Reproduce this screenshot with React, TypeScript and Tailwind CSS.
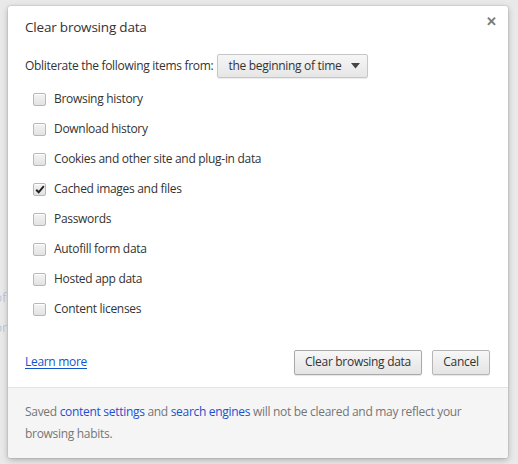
import React from "react";

const items: { label: string; checked: boolean }[] = [
  { label: "Browsing history", checked: false },
  { label: "Download history", checked: false },
  { label: "Cookies and other site and plug-in data", checked: false },
  { label: "Cached images and files", checked: true },
  { label: "Passwords", checked: false },
  { label: "Autofill form data", checked: false },
  { label: "Hosted app data", checked: false },
  { label: "Content licenses", checked: false },
];

function Checkbox({ checked }: { checked: boolean }) {
  return (
    <span className="relative flex h-[13px] w-[13px] shrink-0 items-center justify-center rounded-[2px] border border-[#b8b8b8] bg-gradient-to-b from-[#f4f4f4] to-[#e2e2e2] shadow-[inset_0_1px_0_#fff]">
      {checked && (
        <svg width="10" height="9" viewBox="0 0 10 9" className="absolute">
          <path d="M1.2 4.8 L3.7 7.3 L8.8 1.2" fill="none" stroke="#222" strokeWidth="2" />
        </svg>
      )}
    </span>
  );
}

export default function App() {
  return (
    <div
      className="relative h-[464px] w-[518px] overflow-hidden bg-[#e9e9e9] text-[#333]"
      style={{ fontFamily: '"Open Sans", "Noto Sans", sans-serif' }}
    >
      {/* faded page behind the overlay */}
      <div className="absolute left-[-5px] top-[283px] text-[12px] leading-[30px] text-[#b9c6d6] blur-[0.4px]">
        <div>of</div>
        <div>or</div>
      </div>

      <div className="absolute left-[8px] top-[6px] flex h-[452px] w-[500px] flex-col overflow-hidden rounded-[3px] bg-white shadow-[0_2px_6px_rgba(0,0,0,0.25),0_0_0_1px_rgba(0,0,0,0.06)]">
        <div className="relative flex h-[46px] items-start pl-[17px] pt-[11px] text-[13.5px] leading-[20px] tracking-[-0.2px]">
          Clear browsing data
          <span className="absolute right-[11px] top-[5px] text-[13px] font-bold text-[#7a7a7a]">✕</span>
        </div>

        <div className="flex flex-col px-[17px] text-[12px] tracking-[-0.3px]">
          <div className="flex h-[28px] items-center gap-[4px]">
            <span className="whitespace-nowrap">Obliterate the following items from:</span>
            <span className="flex h-[24px] w-[151px] items-center justify-between whitespace-nowrap rounded-[2px] border border-[#c6c6c6] bg-gradient-to-b from-[#f6f6f6] to-[#e6e6e6] pl-[10px] pr-[7px] shadow-[0_1px_1px_rgba(0,0,0,0.08)]">
              <span>the beginning of time</span>
              <svg width="9" height="6" viewBox="0 0 9 6">
                <path d="M0 0 H9 L4.5 5.5 Z" fill="#444" />
              </svg>
            </span>
          </div>

          <div className="mt-[4px] flex flex-col pl-[8px]">
            {items.map((it) => (
              <div key={it.label} className="flex h-[30px] items-center gap-[8px]">
                <Checkbox checked={it.checked} />
                <span>{it.label}</span>
              </div>
            ))}
          </div>

          <div className="mt-[25px] flex h-[26px] items-center justify-between pr-[1px]">
            <a className="text-[#1155cc] underline underline-offset-[2px]">Learn more</a>
            <div className="flex gap-[10px]">
              <span className="flex h-[25px] w-[128px] items-center justify-center rounded-[2px] border border-[#a9a9a9] bg-gradient-to-b from-[#f7f7f7] to-[#e4e4e4] shadow-[0_1px_1px_rgba(0,0,0,0.1)]">
                Clear browsing data
              </span>
              <span className="flex h-[25px] w-[58px] items-center justify-center rounded-[2px] border border-[#b6b6b6] bg-gradient-to-b from-[#f7f7f7] to-[#e4e4e4] shadow-[0_1px_1px_rgba(0,0,0,0.1)]">
                Cancel
              </span>
            </div>
          </div>
        </div>

        <div className="mt-[12px] flex-1 border-t border-[#e4e4e4] bg-[#f5f5f5] px-[17px] pt-[13px] text-[12px] leading-[22px] tracking-[-0.3px] text-[#757575]">
          Saved <span className="text-[#1d4fd1]">content settings</span> and{" "}
          <span className="text-[#1d4fd1]">search engines</span> will not be cleared and may reflect your
          browsing habits.
        </div>
      </div>
    </div>
  );
}
